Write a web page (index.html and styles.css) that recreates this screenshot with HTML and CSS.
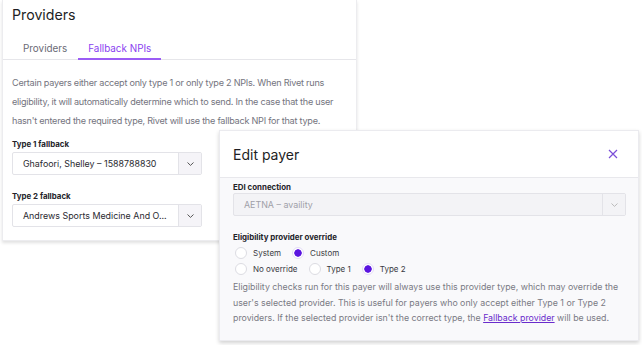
FILE: index.html
```html
<!DOCTYPE html>
<html lang="en">
<head>
    <meta charset="UTF-8">
    <title>Providers</title>
    <link rel="stylesheet" href="styles.css">
</head>
<body>
    <!-- Tarjeta de proveedores -->
    <section class="card">
        <h1 class="card-title">Providers</h1>
        <nav class="tabs">
            <span class="tab">Providers</span>
            <span class="tab activo">Fallback NPIs</span>
        </nav>
        <div class="card-body">
            <p class="desc">Certain payers either accept only type 1 or only type 2 NPIs. When Rivet runs eligibility, it will automatically determine which to send. In the case that the user hasn't entered the required type, Rivet will use the fallback NPI for that type.</p>

            <div class="campo">
                <label class="etiqueta">Type 1 fallback</label>
                <div class="select">
                    <span class="valor">Ghafoori, Shelley – 1588788830</span>
                    <span class="flecha"><svg width="9" height="6" viewBox="0 0 9 6"><path d="M1.5 1.5 4.5 4.4 7.5 1.5" fill="none" stroke="#555" stroke-width="1"/></svg></span>
                </div>
            </div>

            <div class="campo">
                <label class="etiqueta">Type 2 fallback</label>
                <div class="select">
                    <span class="valor">Andrews Sports Medicine And O...</span>
                    <span class="flecha"><svg width="9" height="6" viewBox="0 0 9 6"><path d="M1.5 1.5 4.5 4.4 7.5 1.5" fill="none" stroke="#555" stroke-width="1"/></svg></span>
                </div>
            </div>
        </div>
    </section>

    <!-- Ventana modal -->
    <div class="modal">
        <div class="modal-header">
            <h2>Edit payer</h2>
            <svg class="cerrar" width="10" height="10" viewBox="0 0 10 10"><path d="M1 1 9 9M9 1 1 9" stroke="#7b4fd8" stroke-width="1.2"/></svg>
        </div>
        <div class="modal-body">
            <label class="etiqueta edi">EDI connection</label>
            <div class="select deshabilitado">
                <span class="valor">AETNA – availity</span>
                <span class="flecha"><svg width="9" height="6" viewBox="0 0 9 6"><path d="M1.5 1.5 4.5 4.4 7.5 1.5" fill="none" stroke="#bbb" stroke-width="1"/></svg></span>
            </div>

            <label class="etiqueta override">Eligibility provider override</label>
            <div class="radios">
                <span class="radio"><i></i>System</span>
                <span class="radio marcado"><i></i>Custom</span>
            </div>
            <div class="radios">
                <span class="radio"><i></i>No override</span>
                <span class="radio"><i></i>Type 1</span>
                <span class="radio marcado"><i></i>Type 2</span>
            </div>
            <p class="ayuda">Eligibility checks run for this payer will always use this provider type, which may override the user's selected provider. This is useful for payers who only accept either Type 1 or Type 2 providers. If the selected provider isn't the correct type, the <a href="#">Fallback provider</a> will be used.</p>
        </div>
    </div>
</body>
</html>
```

FILE: styles.css
```css
* {
    margin: 0;
    padding: 0;
    box-sizing: border-box;
}

body {
    font-family: Inter, 'Noto Sans', sans-serif;
    background: #fff;
    color: #222;
    width: 642px;
    height: 345px;
    overflow: hidden;
    position: relative;
}

.card {
    margin-left: 2px;
    width: 355px;
    height: 241px;
    border: 1px solid #ececef;
    border-top: none;
    box-shadow: 0 2px 3px rgba(0,0,0,0.12);
}

.card-title {
    font-size: 14.2px;
    font-weight: 400;
    line-height: 18px;
    padding: 6px 9px 0;
    height: 30px;
    color: #1e1e24;
}

.tabs {
    display: flex;
    padding-left: 9px;
    border-bottom: 1px solid #e6e6ea;
    margin-top: 12px;
}

.tab {
    font-size: 9.9px;
    line-height: 12px;
    color: #6b6b76;
    padding: 0 11px 4px;
    border-bottom: 2px solid transparent;
    margin-bottom: -1px;
}

.tab.activo {
    color: #8a3ff0;
    border-bottom-color: #9b5cf5;
    padding: 0 10px 4px;
}

.card-body {
    padding: 13px 9px 0;
}

.desc {
    font-size: 9.1px;
    letter-spacing: -0.24px;
    line-height: 19px;
    color: #74747e;
}

.campo {
    margin-top: 9px;
}

.campo + .campo {
    margin-top: 16px;
}

.etiqueta {
    display: block;
    font-size: 7.9px;
    line-height: 10px;
    font-weight: 700;
    color: #24242a;
    margin-bottom: 3px;
}

.select {
    display: flex;
    height: 23px;
    width: 190px;
    border: 1px solid #e3e3e8;
    border-radius: 2px;
    background: #fff;
    font-size: 8.9px;
    color: #2a2a30;
}

.select .valor {
    flex: 1;
    padding-left: 10px;
    display: flex;
    align-items: center;
    white-space: nowrap;
}

.select .flecha {
    width: 23px;
    border-left: 1px solid #e3e3e8;
    background: #f5f4f8;
    display: flex;
    align-items: center;
    justify-content: center;
}

/* Ventana modal sobre la tarjeta */
.modal {
    position: absolute;
    left: 219px;
    top: 130px;
    width: 420px;
    height: 211px;
    background: #f9f9fb;
    border: 1px solid #ebebef;
    box-shadow: 0 2px 4px rgba(0,0,0,0.18);
}

.modal-header {
    height: 47px;
    background: #fff;
    border-bottom: 1px solid #e8e8ec;
    display: flex;
    align-items: center;
    justify-content: space-between;
    padding: 0 20px 0 13px;
}

.modal-header h2 {
    font-size: 14px;
    font-weight: 400;
    color: #1e1e24;
}

.modal-body {
    padding: 4px 13px 0;
}

.etiqueta.edi {
    margin-bottom: 1px;
}

.select.deshabilitado {
    width: 393px;
    background: #f3f3f6;
    color: #a0a0a8;
}

.select.deshabilitado .flecha {
    background: #f3f3f6;
}

.etiqueta.override {
    margin-top: 16px;
    margin-bottom: 3px;
}

.radios {
    display: flex;
    gap: 11px;
    height: 16px;
    align-items: center;
    padding-left: 2px;
}

.radio {
    display: flex;
    align-items: center;
    gap: 6px;
    font-size: 8px;
    color: #3a3a42;
}

.radio i {
    width: 12px;
    height: 12px;
    border-radius: 50%;
    border: 1px solid #dcdce2;
    background: #fff;
}

.radio.marcado i {
    background: radial-gradient(circle, #5a14e0 0 3.4px, #fff 4px);
    border-color: #e4dcf7;
}

.ayuda {
    font-size: 8.8px;
    line-height: 15.5px;
    color: #7a7a84;
    margin-top: 2px;
}

.ayuda a {
    color: #6a2ccc;
}
```
